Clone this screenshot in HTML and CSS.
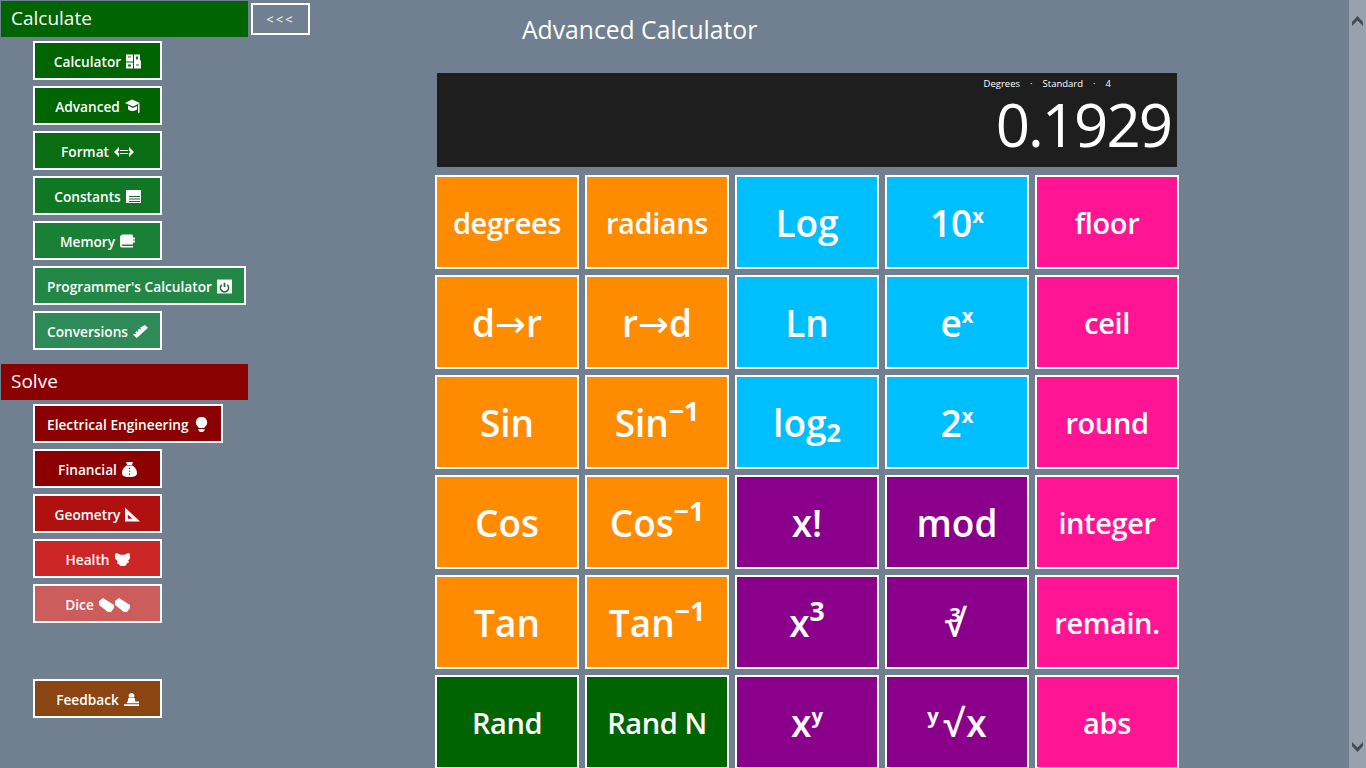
FILE: index.html
```html
<!DOCTYPE html>
<html lang="en">

<head>
    <meta charset="UTF-8">
    <title>Advanced Calculator</title>
    <link rel="stylesheet" href="styles.css">
</head>

<body>
    <div class="page">
        <aside class="sidebar">
            <div class="side-head">
                <div class="section calculate">Calculate</div>
                <button class="collapse">&lt;&lt;&lt;</button>
            </div>
            <nav class="nav-list">
                <a class="nav-btn g1">Calculator
                    <svg viewBox="0 0 15 14"><path d="M0 0h7v7H0zM8 0h6v7H8zM0 8h7v6H0zM8 6h7v8H8z"/><path class="cut" d="M2 2h3v1H2zM10 2h2v3h-2zM2 10h3v2H2zM10 10h3v1h-3z"/></svg>
                </a>
                <a class="nav-btn g1">Advanced
                    <svg viewBox="0 0 15 14"><path d="M7 0l8 3.500L8 7 0 3.500z"/><path d="M3 6l5 2.500L12 6.500V10l-3 1.500H6L3 10zM13 5l1.500-.7V13L13 14z"/></svg>
                </a>
                <a class="nav-btn g2">Format
                    <svg class="wide" viewBox="0 0 20 10"><path d="M5 0 0 5l5 5V7h10v3l5-5-5-5v3H5zM6 4h8V2.500L16.500 5 14 7.500V6H6v1.500L3.500 5 6 2.500z" fill-rule="evenodd"/></svg>
                </a>
                <a class="nav-btn g3">Constants
                    <svg viewBox="0 0 15 13"><path d="M0 0h15v13H0z"/><path class="cut" d="M3 6h11v1H3zM3 8.500h11v1H3zM3 11h11v1H3z"/></svg>
                </a>
                <a class="nav-btn g4">Memory
                    <svg viewBox="0 0 15 14"><path d="M2 0h10l1 1v2h2v2h-2v1h2v2h-2v2H2.500C1.500 10 1.500 11.500 2.500 11.500H13V13H2C0 13 0 11 0 10V2z"/></svg>
                </a>
                <a class="nav-btn g5">Programmer's Calculator
                    <svg viewBox="0 0 14 13"><path d="M0 0h14v13H0z"/><path class="cut" d="M6.200 3h1.600v4H6.200zM4 4.500l1 1a3 3 0 1 0 4 0l1-1a4.500 4.500 0 1 1-6 0z"/></svg>
                </a>
                <a class="nav-btn g6">Conversions
                    <svg viewBox="0 0 16 14"><path d="M12.500 0 16 3 4 14 0 10.500l1.500-1.500 1 1 1-1-1-1 1.500-1.500 1 1 1-1-1-1 1.500-1.500 1 1 1-1-1-1z"/></svg>
                </a>
            </nav>

            <div class="section solve">Solve</div>
            <nav class="nav-list">
                <a class="nav-btn r1">Electrical Engineering
                    <svg viewBox="0 0 13 15"><path d="M6.500 0a5.500 5.500 0 0 1 3 10.200V11h-6v-.8A5.500 5.500 0 0 1 6.500 0zM3.500 12h6v1.500L8 15H5l-1.500-1.500z"/></svg>
                </a>
                <a class="nav-btn r1">Financial
                    <svg viewBox="0 0 13 13"><path d="M3.500 0h6L8.500 2.500h-4zM4 3h5c2.500 1.500 4 4 4 6.500 0 2.500-2 3.500-6.500 3.500S0 12 0 9.500C0 7 1.500 4.500 4 3z"/><path class="cut" d="M6 5h1v1H6zM6 7.500h1v1H6zM6 10h1v1H6z"/></svg>
                </a>
                <a class="nav-btn r2">Geometry
                    <svg viewBox="0 0 16 15"><path d="M0 0l16 15H0zM3 7.500V12h5z" fill-rule="evenodd"/></svg>
                </a>
                <a class="nav-btn r3">Health
                    <svg viewBox="0 0 16 16"><path d="M0 2l2-1 2 1 2 1h4l2-1 2-1 2 1v5l-2 2 1 2-2 1-2 3H6L4 13l-2-1 1-2-3-3z"/></svg>
                </a>
                <a class="nav-btn r4">Dice
                    <svg class="dice" viewBox="0 0 31 15"><path d="M0 4 4 1l11 7v3l-3 4H9L0 8zM16 4l4-3 11 7v3l-3 4h-3l-9-7z"/></svg>
                </a>
            </nav>
            <nav class="nav-list feedback">
                <a class="nav-btn brown">Feedback
                    <svg viewBox="0 0 16 14"><path d="M8 0a3 3 0 0 1 2.500 4.800h-5A3 3 0 0 1 8 0zM4.500 5.500h7l.5 3.500h4v2H3v-1l1-1zM0 12h16v2H0z"/></svg>
                </a>
            </nav>
        </aside>

        <main class="calc">
            <h1 class="calc-title">Advanced Calculator</h1>
            <div class="display">
                <div class="status">
                    <span>Degrees</span><span>&middot;</span><span>Standard</span><span>&middot;</span><span>4</span>
                </div>
                <div class="result">0.1929</div>
            </div>
            <div class="keys">
                <button class="key orange">degrees</button>
                <button class="key orange">radians</button>
                <button class="key blue big">Log</button>
                <button class="key blue big">10<sup>x</sup></button>
                <button class="key pink">floor</button>

                <button class="key orange big">d<span class="arrow">→</span>r</button>
                <button class="key orange big">r<span class="arrow">→</span>d</button>
                <button class="key blue big">Ln</button>
                <button class="key blue big">e<sup>x</sup></button>
                <button class="key pink">ceil</button>

                <button class="key orange big">Sin</button>
                <button class="key orange big">Sin<sup class="inv">−1</sup></button>
                <button class="key blue big">log<sub>2</sub></button>
                <button class="key blue big">2<sup>x</sup></button>
                <button class="key pink">round</button>

                <button class="key orange big">Cos</button>
                <button class="key orange big">Cos<sup class="inv">−1</sup></button>
                <button class="key purple big">x!</button>
                <button class="key purple big">mod</button>
                <button class="key pink">integer</button>

                <button class="key orange big">Tan</button>
                <button class="key orange big">Tan<sup class="inv">−1</sup></button>
                <button class="key purple big">x<sup class="inv">3</sup></button>
                <button class="key purple big"><sup class="root-idx">3</sup>√</button>
                <button class="key pink">remain.</button>

                <button class="key green">Rand</button>
                <button class="key green">Rand N</button>
                <button class="key purple big">x<sup>y</sup></button>
                <button class="key purple big"><sup>y</sup><span class="rad">√</span>x</button>
                <button class="key pink">abs</button>
            </div>
        </main>

        <div class="scrollbar">
            <svg viewBox="0 0 11 10"><path d="M5.500 0 11 6v4L5.500 4.500 0 10V6z"/></svg>
            <svg viewBox="0 0 11 10"><path d="M5.500 10 0 4V0l5.500 5.500L11 0v4z"/></svg>
        </div>
    </div>
</body>

</html>
```

FILE: styles.css
```css
* {
    box-sizing: border-box;
}

body {
    margin: 0;
    background-color: #708090;
    color: white;
    font-family: "Open Sans", "Noto Sans", sans-serif;
    overflow: hidden;
}

.page {
    display: flex;
    height: 768px;
    overflow: hidden;
}

/* left column */
.sidebar {
    width: 310px;
    flex-shrink: 0;
    padding: 1px 0 0 1px;
}

.side-head {
    display: flex;
    align-items: center;
    gap: 3px;
}

.section {
    width: 247px;
    height: 36px;
    padding-left: 10px;
    font-size: 19px;
    line-height: 34px;
}

.calculate {
    background-color: #006400;
}

.solve {
    margin-top: 14px;
    background-color: #8b0000;
}

.collapse {
    width: 59px;
    height: 32px;
    padding: 0;
    border: 2px solid white;
    background: none;
    color: white;
    font-family: inherit;
    font-size: 13px;
    letter-spacing: 2px;
}

.nav-list {
    display: flex;
    flex-direction: column;
    align-items: flex-start;
    gap: 6px;
    margin: 4px 0 0 32px;
}

.feedback {
    margin-top: 56px;
}

.nav-btn {
    display: flex;
    align-items: center;
    justify-content: center;
    gap: 5px;
    min-width: 129px;
    height: 39px;
    padding: 2px 12px 0;
    border: 2px solid white;
    font-size: 13.700px;
    font-weight: 600;
    white-space: nowrap;
}

.nav-btn svg {
    width: 15px;
    height: 15px;
    fill: white;
}

.nav-btn svg.wide {
    width: 20px;
    height: 10px;
}

.nav-btn svg.dice {
    width: 31px;
}

.nav-btn .cut {
    fill: #1d6b38;
}

.r1 .cut {
    fill: #8b0000;
}

.g1 { background-color: #006400; }
.g2 { background-color: #096d13; }
.g3 { background-color: #107724; }
.g4 { background-color: #1a8035; }
.g5 { background-color: #238746; }
.g6 { background-color: #2e8b57; }
.r1 { background-color: #8b0000; }
.r2 { background-color: #b01010; }
.r3 { background-color: #cd2626; }
.r4 { background-color: #cd5c5c; }
.brown { background-color: #8b4513; }

/* calculator */
.calc {
    flex: 1;
    padding-left: 125px;
}

.calc-title {
    margin: 13px 0 0 87px;
    font-size: 24.700px;
    font-weight: 400;
    line-height: 34px;
}

.display {
    width: 740px;
    height: 94px;
    margin: 26px 0 8px 2px;
    padding: 4px 6px 0 0;
    background-color: #1e1e1e;
    text-align: right;
}

.status {
    display: flex;
    justify-content: flex-end;
    gap: 10px;
    padding-right: 60px;
    font-size: 9.500px;
    line-height: 14px;
}

.result {
    font-size: 60px;
    font-weight: 400;
    letter-spacing: -2px;
    line-height: 66px;
}

.keys {
    display: grid;
    grid-template-columns: repeat(5, 144px);
    grid-auto-rows: 94px;
    gap: 6px;
}

.key {
    padding: 0;
    border: 2px solid white;
    color: white;
    font-family: inherit;
    font-size: 29px;
    font-weight: 600;
    letter-spacing: -0.4px;
    line-height: 1;
}

.big {
    font-size: 37px;
    letter-spacing: 0;
}

.key sup,
.key sub {
    font-size: 0.55em;
    font-weight: 700;
    line-height: 0;
}

.key sup {
    vertical-align: 0.7em;
}

.key sub {
    font-size: 0.68em;
    vertical-align: -0.2em;
}

.key sup.inv {
    font-size: 0.72em;
    vertical-align: 0.6em;
}

.key sup.root-idx {
    margin-right: -0.8em;
}

.key .arrow {
    font-family: "DejaVu Sans", sans-serif;
    font-size: 1em;
    font-weight: 400;
    line-height: 0;
}

.key .rad {
    margin: 0 3px 0 4px;
}

.orange { background-color: #ff8c00; }
.blue { background-color: #00bfff; }
.pink { background-color: #ff1493; }
.purple { background-color: #8b008b; }
.green { background-color: #006400; }

/* scrollbar strip on the right */
.scrollbar {
    display: flex;
    flex-direction: column;
    justify-content: space-between;
    align-items: center;
    width: 17px;
    flex-shrink: 0;
    padding: 16px 0;
    background-color: #98a2ae;
}

.scrollbar svg {
    width: 11px;
    height: 10px;
    fill: #444b55;
}
```
